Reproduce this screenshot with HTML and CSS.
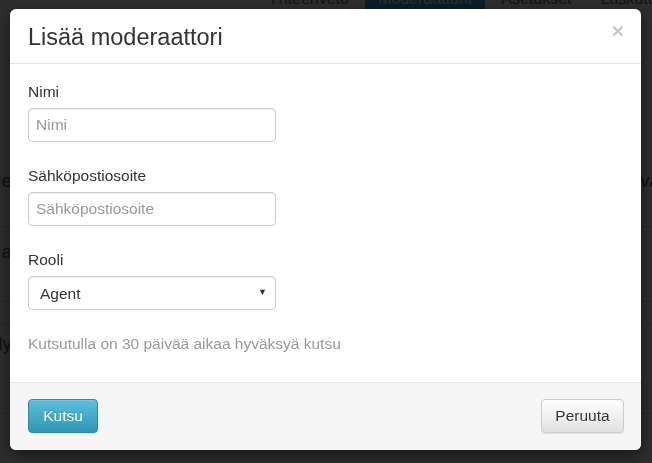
FILE: index.html
```html
<!DOCTYPE html>
<html lang="fi">
<head>
  <meta charset="UTF-8" />
  <title>Lisää moderaattori</title>
  <link rel="stylesheet" href="styles.css">
</head>
<body>

<div class="page">
  <div class="tabs">
    <span class="tab">Yhteenveto</span>
    <span class="tab active">Moderaattorit</span>
    <span class="tab">Asetukset</span>
    <span class="tab">Laskutus</span>
  </div>
  <div class="rows">
    <div class="row row-a"><span class="cell-left">Kuvaus kaude</span><span class="cell-right">vaihda</span></div>
    <div class="row row-b"><span class="cell-left">Anna</span><span class="cell-right"></span></div>
    <div class="row row-c"><span class="cell-left"></span><span class="cell-right"></span></div>
    <div class="row row-d"><span class="cell-left">Recently</span><span class="cell-right"></span></div>
  </div>
</div>

<div class="backdrop"></div>

<div class="modal">
  <div class="modal-header">
    <span class="close">&times;</span>
    <h4 class="modal-title">Lisää moderaattori</h4>
  </div>
  <div class="modal-body">
    <div class="form-group">
      <label for="name">Nimi</label>
      <input type="text" id="name" placeholder="Nimi">
    </div>
    <div class="form-group">
      <label for="email">Sähköpostiosoite</label>
      <input type="text" id="email" placeholder="Sähköpostiosoite">
    </div>
    <div class="form-group">
      <label for="role">Rooli</label>
      <div class="select-wrap">
        <select id="role">
          <option>Agent</option>
          <option>Admin</option>
        </select>
        <span class="caret">&#9660;</span>
      </div>
    </div>
    <p class="help">Kutsutulla on 30 päivää aikaa hyväksyä kutsu</p>
  </div>
  <div class="modal-footer">
    <button type="button" class="btn btn-info">Kutsu</button>
    <button type="button" class="btn btn-default">Peruuta</button>
  </div>
</div>

</body>
</html>
```

FILE: styles.css
```css
html, body {
  margin: 0;
  padding: 0;
  height: 100%;
  font-family: "Liberation Sans", Arial, sans-serif;
  background: #fff;
  overflow: hidden;
}
.page {
  height: 100%;
  overflow: hidden;
  color: #333;
  font-size: 15.5px;
}
.tabs {
  display: flex;
  padding-left: 255px;
  height: 10px;
  overflow: hidden;
  white-space: nowrap;
}
.tab {
  padding: 0 13px;
  margin-right: 3px;
  line-height: 22px;
  height: 22px;
  margin-top: -12px;
  color: #666;
  font-size: 16px;
}
.tab.active {
  background: #3ca5e2;
  color: #fff;
}
.rows {
  margin-top: 158px;
}
.row {
  display: flex;
  justify-content: space-between;
  border-bottom: 1px solid #ddd;
  font-size: 19px;
  color: #555;
  white-space: nowrap;
}
.cell-left {
  width: 12px;
  display: flex;
  justify-content: flex-end;
}
.cell-right {
  width: 12px;
  overflow: hidden;
}
.row-a { height: 56px; padding-top: 2px; }
.row-b { height: 60px; padding-top: 14px; }
.row-c { height: 22px; }
.row-d { height: 80px; padding-top: 8px; }
.backdrop {
  position: fixed;
  inset: 0;
  background: rgba(0, 0, 0, 0.82);
}
.modal {
  position: absolute;
  top: 9px;
  left: 10px;
  width: 631px;
  background: #fff;
  border-radius: 6px;
  box-shadow: 0 5px 15px rgba(0, 0, 0, 0.5);
  color: #333;
  font-size: 15.5px;
}
.modal-header {
  padding: 15px 18px 13px 18px;
  border-bottom: 1px solid #e5e5e5;
}
.modal-title {
  margin: 0;
  font-size: 23.5px;
  font-weight: normal;
  line-height: 26px;
  color: #333;
}
.close {
  float: right;
  font-size: 21px;
  font-weight: bold;
  line-height: 20px;
  color: #c8c8c8;
  margin-top: -3px;
  margin-right: -1px;
}
.modal-body {
  padding: 17px 18px 27px 18px;
}
.form-group {
  margin-bottom: 23px;
}
label {
  display: block;
  line-height: 22px;
  margin-bottom: 5px;
}
input[type=text], select {
  display: block;
  width: 248px;
  height: 34px;
  box-sizing: border-box;
  border: 1px solid #ccc;
  border-radius: 4px;
  padding: 0 7px;
  font-family: inherit;
  font-size: 15.5px;
  color: #555;
  background: #fff;
  box-shadow: inset 0 1px 1px rgba(0, 0, 0, 0.06);
}
input::placeholder {
  color: #999;
}
.select-wrap {
  position: relative;
  width: 248px;
}
select {
  appearance: none;
  -webkit-appearance: none;
  padding: 0 11px;
  color: #333;
}
.caret {
  position: absolute;
  right: 9px;
  top: 11px;
  font-size: 9px;
  color: #333;
  pointer-events: none;
}
.help {
  margin: 0;
  line-height: 22px;
  color: #999;
}
.modal-footer {
  display: flex;
  justify-content: space-between;
  padding: 16px 17px 17px 18px;
  background: #f5f5f5;
  border-top: 1px solid #e5e5e5;
  border-radius: 0 0 6px 6px;
}
.btn {
  height: 34px;
  border-radius: 4px;
  font-family: inherit;
  font-size: 15.5px;
  padding: 0;
  cursor: pointer;
}
.btn-info {
  width: 70px;
  color: #fff;
  background: linear-gradient(to bottom, #5bc0de 0%, #2f96b4 100%);
  border: 1px solid #2a8aab;
  text-shadow: 0 -1px 0 rgba(0, 0, 0, 0.2);
  box-shadow: inset 0 1px 0 rgba(255, 255, 255, 0.15), 0 1px 1px rgba(0, 0, 0, 0.075);
}
.btn-default {
  width: 83px;
  color: #333;
  background: linear-gradient(to bottom, #fff 0%, #e0e0e0 100%);
  border: 1px solid #ccc;
  text-shadow: 0 1px 0 #fff;
  box-shadow: inset 0 1px 0 rgba(255, 255, 255, 0.15), 0 1px 1px rgba(0, 0, 0, 0.075);
}
```
